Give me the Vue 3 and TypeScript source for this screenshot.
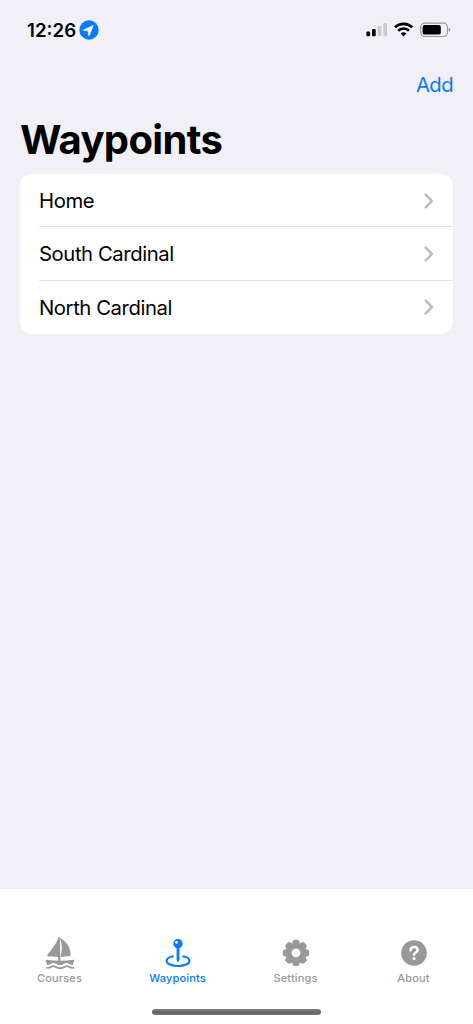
<script setup lang="ts">
interface Tab {
  id: string
  label: string
}

const waypoints: string[] = ['Home', 'South Cardinal', 'North Cardinal']
const tabs: Tab[] = [
  { id: 'courses', label: 'Courses' },
  { id: 'waypoints', label: 'Waypoints' },
  { id: 'settings', label: 'Settings' },
  { id: 'about', label: 'About' },
]
const activeTab = 'waypoints'
const teeth: number[] = [0, 45, 90, 135, 180, 225, 270, 315]
</script>

<template>
  <div class="screen">
    <header class="status">
      <div class="clock">
        <span class="time">12:26</span>
        <svg class="location" viewBox="0 0 20 20">
          <circle cx="10" cy="10" r="9.7" fill="#087aff" />
          <path d="M14.2 5.5 4.6 9.7q-.6.5.2.8l4.4.3.3 4.4q.3.8.8.2Z" fill="#fff" stroke="#fff" stroke-width=".6" stroke-linejoin="round" />
        </svg>
      </div>
      <svg class="indicators" viewBox="0 0 86 16">
        <rect x=".4" y="9.6" width="3.7" height="4.6" rx="1" />
        <rect x="6" y="7.1" width="3.7" height="7.1" rx="1" />
        <rect x="11.7" y="4.1" width="3.7" height="10.1" rx="1" fill="#c9c9ce" />
        <rect x="17.3" y="1" width="3.7" height="13.2" rx="1" fill="#c9c9ce" />
        <g fill="none" stroke="#000" stroke-width="2.6">
          <path d="M29 5.3a12.4 12.4 0 0 1 17.2 0" />
          <path d="M32.2 8.7a7.8 7.8 0 0 1 10.8 0" />
        </g>
        <path d="M34.7 11.6a4.2 4.2 0 0 1 5.8 0l-2.9 2.9Z" />
        <rect x="54.7" y="1.1" width="26.8" height="13.4" rx="4" fill="none" stroke="#98989c" stroke-width="1.1" />
        <rect x="56.6" y="3" width="18.2" height="9.6" rx="2.2" />
        <path d="M82.8 5.5q1.6.8 1.6 2.3t-1.6 2.3Z" fill="#98989c" />
      </svg>
    </header>

    <nav class="toolbar"><button class="add" type="button">Add</button></nav>
    <h1 class="title">Waypoints</h1>

    <ul class="list">
      <li v-for="name in waypoints" :key="name" class="row">
        <span class="name">{{ name }}</span>
        <svg class="chevron" viewBox="0 0 10 16">
          <path d="m1.7 1.7 6.2 6.3-6.2 6.3" fill="none" stroke="#bcbcbf" stroke-width="2.5" stroke-linecap="round" stroke-linejoin="round" />
        </svg>
      </li>
    </ul>

    <footer class="tabbar">
      <div class="tabs">
        <div v-for="tab in tabs" :key="tab.id" class="tab" :class="{ active: tab.id === activeTab }">
          <svg class="icon" viewBox="0 0 40 36">
            <template v-if="tab.id === 'courses'">
              <path d="M18.5 2.6C16.2 9 11.7 14.8 7.3 19.7q-.6 1.2.6 1.5l10.6.9ZM20 3C27 7 30.8 13 30.5 19.8q-.1 1-1 1.2l-9.1 1C22.6 15.5 22.2 9.5 20 3Z" />
              <path d="M18 2.4q1-.8 1.9.3l.4 23.3H18Z" />
              <path d="M6.3 24.8q14 1.8 27.4 0 .9 0 .6 1l-1.4 4.2q-2.4 0-4.3-1.5-2.1-1.2-4.1 0-2.3 1.7-4.6 1.7t-4.6-1.7q-2-1.2-4.1 0-2 1.5-4.1 1.5L5.8 25.8q-.2-1 .5-1Z" />
              <path d="M6.3 32.8q2.4.4 4.7-1 2.3-1.3 4.6 0 2.2 1.5 4.6 1.5t4.6-1.5q2.3-1.3 4.6 0 2.3 1.4 4.7 1" fill="none" stroke="currentColor" stroke-width="1.9" />
            </template>
            <template v-else-if="tab.id === 'waypoints'">
              <path d="M15.7 21.3C11.2 22 8.6 23.7 8.6 25.9c0 3 5 5.1 11.4 5.1s11.4-2.1 11.4-5.1c0-2.2-2.6-3.9-7.1-4.6" fill="none" stroke="currentColor" stroke-width="2.1" />
              <path d="M18.6 11h2.8v13.5q0 1.3-1.4 2.8-1.4-1.5-1.4-2.8Z" />
              <circle cx="20" cy="8.8" r="4.7" />
              <circle cx="18.5" cy="7.4" r="1.3" fill="#fff" />
            </template>
            <template v-else-if="tab.id === 'settings'">
              <path v-for="angle in teeth" :key="angle" d="M15.7 9.6 17 5.7q.3-1 1.4-1h3.2q1.1 0 1.4 1l1.3 3.9Z" :transform="`rotate(${angle} 20 17.9)`" />
              <circle cx="20" cy="17.9" r="7.4" fill="none" stroke="currentColor" stroke-width="6" />
            </template>
            <template v-else>
              <circle cx="20" cy="18" r="12.8" />
              <path d="M16.6 15.2c.1-2 1.4-3.1 3.5-3.1 2.1 0 3.5 1.1 3.5 2.9 0 2.6-3.6 2.5-3.6 4.8" fill="none" stroke="#fff" stroke-width="2.5" stroke-linecap="round" />
              <circle cx="20" cy="23.6" r="1.6" fill="#fff" />
            </template>
          </svg>
          <span class="label">{{ tab.label }}</span>
        </div>
      </div>
      <div class="home-indicator"></div>
    </footer>
  </div>
</template>

<style>
body {
  margin: 0;
}
</style>

<style scoped>
.screen {
  display: flex;
  flex-direction: column;
  width: 473px;
  height: 1024px;
  overflow: hidden;
  background: #f1f0f6;
  color: #000;
  font-family: Inter, 'Liberation Sans', sans-serif;
}
.status {
  display: flex;
  justify-content: space-between;
  height: 60px;
  padding: 0 21px 0 27px;
  box-sizing: border-box;
}
.clock {
  display: flex;
  align-items: center;
  gap: 2px;
  height: 60.5px;
}
.time {
  width: 50px;
  font-size: 18.7px;
  font-weight: 600;
  white-space: nowrap;
}
.location {
  width: 20px;
  height: 20px;
}
.indicators {
  width: 86px;
  height: 16px;
  margin-top: 22px;
}
.toolbar {
  display: flex;
  justify-content: flex-end;
  align-items: center;
  height: 50px;
  padding-right: 20px;
}
.add {
  padding: 0;
  border: 0;
  background: none;
  color: #087aff;
  font: 400 20.3px/24px Inter, sans-serif;
  letter-spacing: -0.6px;
}
.title {
  height: 50px;
  margin: 5px 0 9px 20px;
  line-height: 50px;
  font-size: 40px;
  font-weight: 700;
  letter-spacing: -0.65px;
}
.list {
  margin: 0 20px 0 20px;
  padding: 0;
  list-style: none;
  border-radius: 12px;
  background: #fff;
}
.row {
  display: flex;
  justify-content: space-between;
  align-items: center;
  height: 53.33px;
  margin-left: 19px;
  padding-right: 19px;
  box-sizing: border-box;
}
.row + .row {
  box-shadow: 0 -1px 0 #e4e4e6;
}
.name {
  font-size: 20.3px;
  letter-spacing: -0.42px;
}
.chevron {
  width: 10px;
  height: 16px;
}
.tabbar {
  display: flex;
  flex-direction: column;
  align-items: center;
  height: 135px;
  margin-top: auto;
  background: #fff;
}
.tabs {
  display: grid;
  grid-template-columns: repeat(4, 118px);
  width: 472px;
  margin-top: 46px;
}
.tab {
  display: flex;
  flex-direction: column;
  align-items: center;
  color: #999;
}
.tab.active {
  color: #087aff;
}
.icon {
  width: 40px;
  height: 36px;
  fill: currentColor;
}
.label {
  line-height: 14px;
  font-size: 11px;
  font-weight: 500;
  letter-spacing: 0.15px;
}
.home-indicator {
  width: 169px;
  height: 6px;
  margin-top: 24px;
  border-radius: 3px;
  background: linear-gradient(#858585, #626462 55%, #777);
}
</style>
